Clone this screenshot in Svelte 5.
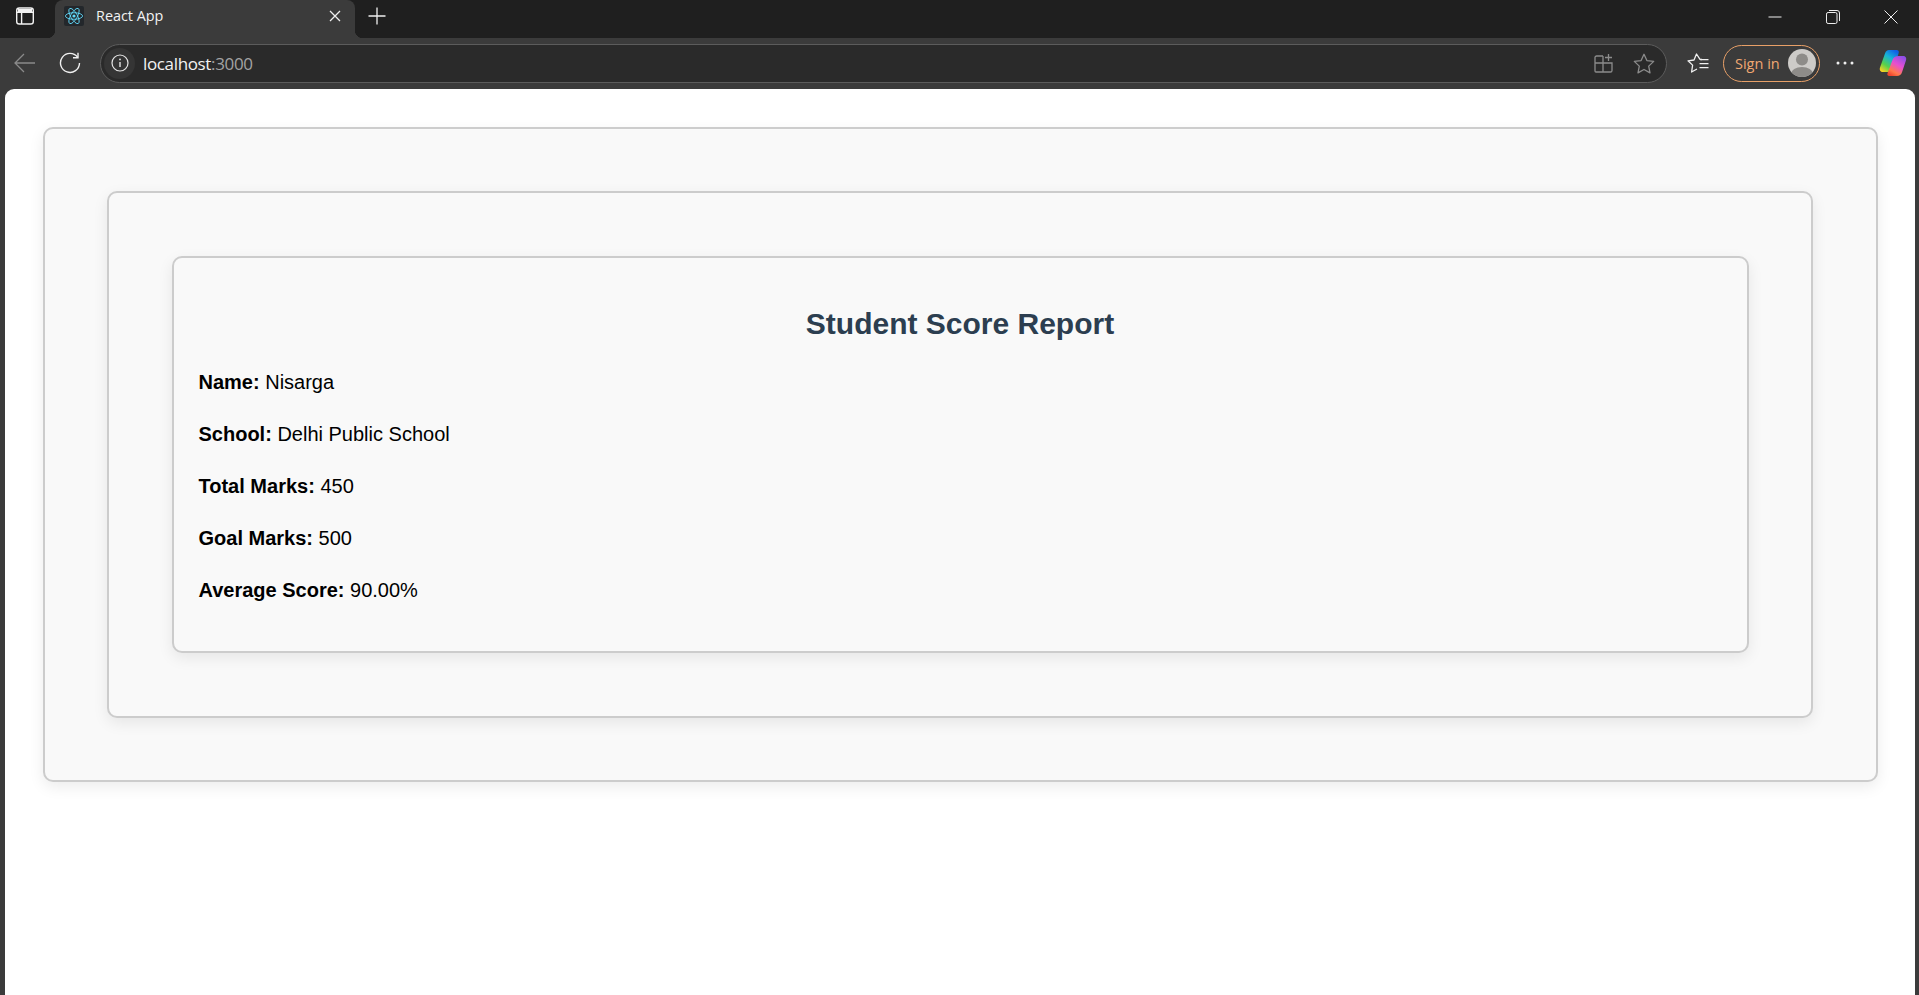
<script>
  const rows = [
    { label: 'Name:', value: 'Nisarga' },
    { label: 'School:', value: 'Delhi Public School' },
    { label: 'Total Marks:', value: '450' },
    { label: 'Goal Marks:', value: '500' },
    { label: 'Average Score:', value: '90.00%' }
  ];
</script>

<div class="browser">
  <div class="tabbar">
    <div class="tabbar__side">
      <svg width="20" height="20" viewBox="0 0 20 20" fill="none" stroke="#f2f2f2" stroke-width="1.4">
        <rect x="1.7" y="2" width="16.6" height="16" rx="2.6" />
        <path d="M1.7 6.2h16.6M6.6 6.2V18" />
        <path d="M3 3h14v3H3z" fill="#f2f2f2" stroke="none" />
      </svg>
    </div>
    <div class="tab">
      <span class="tab__icon">
        <svg width="18" height="18" viewBox="-11.5 -10.5 23 21" fill="none" stroke="#61dafb" stroke-width="1.1">
          <circle r="2.05" fill="#61dafb" stroke="none" />
          <ellipse rx="11" ry="4.2" />
          <ellipse rx="11" ry="4.2" transform="rotate(60)" />
          <ellipse rx="11" ry="4.2" transform="rotate(120)" />
        </svg>
      </span>
      <span class="tab__title">React App</span>
      <svg class="tab__close" width="12" height="12" viewBox="0 0 12 12" stroke="#f0f0f0" stroke-width="1.3">
        <path d="M1 1l10 10M11 1L1 11" />
      </svg>
    </div>
    <div class="newtab">
      <svg width="18" height="18" viewBox="0 0 18 18" stroke="#f0f0f0" stroke-width="1.3">
        <path d="M9 0.5v17M0.5 9h17" />
      </svg>
    </div>
    <div class="winctl">
      <span class="winctl__btn">
        <svg width="14" height="14" viewBox="0 0 14 14" stroke="#eee" stroke-width="1"><path d="M0.5 7h13" /></svg>
      </span>
      <span class="winctl__btn">
        <svg width="14" height="14" viewBox="0 0 14 14" fill="none" stroke="#eee" stroke-width="1">
          <rect x="0.5" y="2.5" width="10.5" height="11" rx="1.6" />
          <path d="M3 .5h8a2.5 2.5 0 0 1 2.5 2.5v8" />
        </svg>
      </span>
      <span class="winctl__btn">
        <svg width="14" height="14" viewBox="0 0 14 14" stroke="#eee" stroke-width="1"><path d="M0.5 0.5l13 13M13.5 0.5l-13 13" /></svg>
      </span>
    </div>
  </div>

  <div class="toolbar">
    <span class="tool tool--back">
      <svg width="22" height="20" viewBox="0 0 22 20" fill="none" stroke="#8a8a8a" stroke-width="1.3">
        <path d="M21 10H1M10 1l-9 9 9 9" />
      </svg>
    </span>
    <span class="tool tool--reload">
      <svg width="22" height="22" viewBox="0 0 22 22" fill="none" stroke="#f0f0f0" stroke-width="1.4">
        <path d="M18.6 5.2A9.5 9.5 0 1 0 20.5 11" />
        <path d="M19 .8v5h-5" />
      </svg>
    </span>
    <div class="address">
      <span class="address__info">
        <svg width="18" height="18" viewBox="0 0 18 18" fill="none" stroke="#e6e6e6" stroke-width="1.2">
          <circle cx="9" cy="9" r="8" />
          <path d="M9 8v5" stroke-width="1.4" />
          <circle cx="9" cy="5.4" r=".9" fill="#e6e6e6" stroke="none" />
        </svg>
      </span>
      <span class="address__url">localhost<span class="address__port">:3000</span></span>
      <span class="address__spacer"></span>
      <span class="tool">
        <svg width="20" height="20" viewBox="0 0 20 20" fill="none" stroke="#8c8c8c" stroke-width="1.3">
          <path d="M9 3H2.6A1.6 1.6 0 0 0 1 4.6V18a1 1 0 0 0 1 1h14.4a1.6 1.6 0 0 0 1.6-1.6V10H1M9 3v16" />
          <path d="M14.5 1v7M11 4.5h7" />
        </svg>
      </span>
      <span class="tool">
        <svg width="22" height="21" viewBox="0 0 22 21" fill="none" stroke="#8c8c8c" stroke-width="1.3" stroke-linejoin="round">
          <path d="M11 1.3l2.9 6.3 6.8.8-5 4.7 1.3 6.8-6-3.4-6 3.4 1.3-6.8-5-4.7 6.8-.8z" />
        </svg>
      </span>
    </div>
    <span class="tool tool--fav">
      <svg width="22" height="21" viewBox="0 0 22 21" fill="none" stroke="#f0f0f0" stroke-width="1.3" stroke-linejoin="round">
        <path d="M15 6.500L13 6.400 9.500 1 7 7 1 7.800l4.600 4.300L4.600 19l5.400-3" />
        <path d="M13 6.700h8.500M12.500 10.700h9M12.500 14.700h9" />
      </svg>
    </span>
    <div class="signin">
      <span class="signin__label">Sign in</span>
      <svg class="signin__avatar" width="28" height="28" viewBox="0 0 28 28">
        <defs><clipPath id="avatar-clip"><circle cx="14" cy="14" r="14" /></clipPath></defs>
        <circle cx="14" cy="14" r="14" fill="#cdcbc8" />
        <g clip-path="url(#avatar-clip)" fill="#8e8c89">
          <circle cx="14" cy="10.500" r="6" />
          <ellipse cx="14" cy="25" rx="11" ry="7" />
        </g>
      </svg>
    </div>
    <span class="tool tool--more">
      <svg width="18" height="4" viewBox="0 0 18 4" fill="#f0f0f0">
        <circle cx="2" cy="2" r="1.500" /><circle cx="9" cy="2" r="1.500" /><circle cx="16" cy="2" r="1.500" />
      </svg>
    </span>
    <span class="tool tool--copilot">
      <svg width="28" height="28" viewBox="0 0 28 28">
        <defs>
          <linearGradient id="cop-left" x1="0.75" y1="0" x2="0.15" y2="1">
            <stop offset="0" stop-color="#0f5fe6" />
            <stop offset="0.35" stop-color="#17b4d8" />
            <stop offset="0.7" stop-color="#58d24a" />
            <stop offset="1" stop-color="#ffd21f" />
          </linearGradient>
          <linearGradient id="cop-right" x1="0.8" y1="0" x2="0.25" y2="1">
            <stop offset="0" stop-color="#8a4fe8" />
            <stop offset="0.45" stop-color="#e84fd0" />
            <stop offset="0.8" stop-color="#ff7a4a" />
            <stop offset="1" stop-color="#f0442e" />
          </linearGradient>
        </defs>
        <path d="M10 1h7.500c1.700 0 2.700 1.300 2.200 3L15 19c-.8 2.500-2.500 4-5 4H4c-2.500 0-3.800-2-3-4.500L6 4.500C6.700 2.300 8 1 10 1z" fill="url(#cop-left)" />
        <path d="M19.500 7H24c2.500 0 3.800 1.800 3 4.300l-4 12c-.8 2.500-2.500 3.700-5 3.700h-7.500c-1.700 0-2.600-1.200-2-2.800l5-13.200C14.300 8.300 16.500 7 19.500 7z" fill="url(#cop-right)" />
      </svg>
    </span>
  </div>

  <main class="page">
    <section class="card card--outer">
      <section class="card">
        <section class="card report">
          <h2 class="report__title">Student Score Report</h2>
          <div class="report__rows">
            {#each rows as r}
              <p class="report__row"><strong>{r.label}</strong> {r.value}</p>
            {/each}
          </div>
        </section>
      </section>
    </section>
  </main>
</div>

<style>
  :global(body) { margin: 0; background: #3b3b3b; }
  .browser { height: 995px; display: flex; flex-direction: column; overflow: hidden; background: #3b3b3b; font-family: "Open Sans", "Noto Sans", sans-serif; }

  .tabbar { height: 38px; display: flex; background: #1f1f1f; }
  .tabbar__side { width: 55px; display: flex; align-items: center; justify-content: center; padding: 0 5px 6px 0; box-sizing: border-box; }
  .tab { width: 300px; display: flex; align-items: center; background: #3b3b3b; border-radius: 8px 8px 0 0; padding: 0 14px 6px 9px; box-sizing: border-box; position: relative; }
  .tab::before, .tab::after { content: ""; position: absolute; bottom: 0; width: 8px; height: 8px; }
  .tab::before { left: -8px; background: radial-gradient(circle at 0 0, transparent 8px, #3b3b3b 8.500px); }
  .tab::after { right: -8px; background: radial-gradient(circle at 100% 0, transparent 8px, #3b3b3b 8.500px); }
  .tab__icon { width: 20px; height: 20px; display: flex; align-items: center; justify-content: center; background: #23272b; border-radius: 2px; }
  .tab__title { margin: -2px 0 0 12px; font-size: 14.400px; color: #f2f2f2; flex: 1; }
  .newtab { width: 44px; display: flex; align-items: center; justify-content: center; padding-bottom: 6px; box-sizing: border-box; }
  .winctl { margin-left: auto; display: flex; margin-right: -1px; }
  .winctl__btn { width: 58px; display: flex; align-items: center; justify-content: center; padding-bottom: 6px; box-sizing: border-box; }
  .winctl__btn svg { margin-top: 1px; }

  .toolbar { height: 51px; display: flex; align-items: center; padding: 0 6px 1px 0; box-sizing: border-box; flex: none; }
  .tool { width: 40px; height: 38px; display: flex; align-items: center; justify-content: center; flex: none; }
  .tool--back { width: 50px; }
  .tool--fav { margin-left: 11px; }
  .tool--more { margin-left: 5px; }
  .tool--copilot { margin-left: 8px; }

  .address { flex: 1; height: 39px; margin-left: 10px; display: flex; align-items: center; box-sizing: border-box; background: #2a2a2a; border: 1px solid #5c5c5c; border-radius: 20px; padding: 0 2px 0 4px; }
  .address__info { width: 31px; height: 31px; margin-left: -1px; display: flex; align-items: center; justify-content: center; background: #353535; border-radius: 50%; }
  .address__url { margin-left: 8px; font-size: 17px; color: #f2f2f2; letter-spacing: -0.35px; }
  .address__port { color: #a3a3a3; }
  .address__spacer { flex: 1; }

  .signin { width: 97px; height: 37px; margin-left: 5px; flex: none; display: flex; align-items: center; justify-content: space-between; box-sizing: border-box; border: 1.500px solid #e8a068; border-radius: 19px; padding: 0 3px 0 11px; }
  .signin__label { font-size: 14.500px; color: #f0a872; }
  .signin__avatar { flex: none; }

  .page { flex: 1; margin: 0 4px 0 5px; background: #fff; border-radius: 9px 9px 0 0; padding: 37.500px; font-family: "Liberation Sans", Arial, sans-serif; }
  .card { background: #f9f9f9; border: 2px solid #ccc; border-radius: 10px; padding: 25px; box-shadow: 0 5px 15px rgba(0, 0, 0, 0.08); margin: 37.500px; }
  .card--outer { margin: 0; }
  .report { padding-bottom: 49px; }
  .report__title { margin: 24px 0 30.500px; font-size: 30px; font-weight: 700; text-align: center; color: #2c3e50; }
  .report__rows { display: flex; flex-direction: column; gap: 29px; }
  .report__row { margin: 0; font-size: 20px; color: #000; }
  .report__row strong { font-weight: 700; }
</style>
